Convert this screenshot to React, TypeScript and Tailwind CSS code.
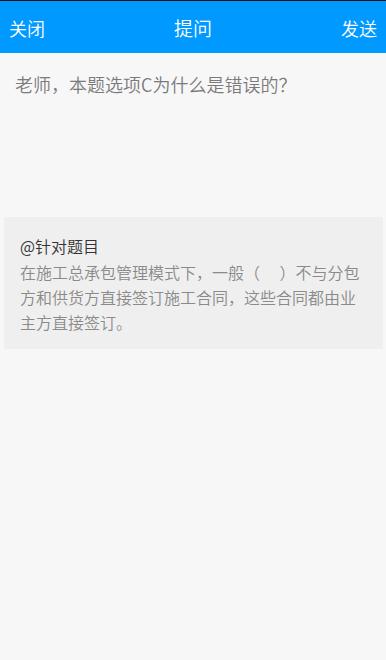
import React from 'react';

const font = { fontFamily: '"Noto Sans CJK SC", "Roboto", sans-serif' };

const App: React.FC = () => {
  return (
    <div style={font} className="min-h-[660px] bg-[#f7f7f7] font-[350]">
      <div className="h-[53px] border-t border-[#111] bg-[#0099ff] flex items-center justify-between px-[9px] pt-[2px] text-white">
        <span className="text-[18px]">关闭</span>
        <span className="text-[19px]">提问</span>
        <span className="text-[18px]">发送</span>
      </div>
      <div className="h-[164px] px-[15px] pt-[17px] text-[18px] leading-[28px] text-[#7a7a7a]">
        老师，本题选项C为什么是错误的？
      </div>
      <div className="ml-[4px] mr-[3px] h-[132px] bg-[#efefef] px-[16px] pt-[17px]">
        <p className="text-[16px] leading-[24px] text-[#333]">@针对题目</p>
        <p className="mt-[2px] text-[16px] leading-[25px] text-[#8a8a8a]">
          在施工总承包管理模式下，一般（　 ）不与分包方和供货方直接签订施工合同，这些合同都由业主方直接签订。
        </p>
      </div>
    </div>
  );
};

export default App;
